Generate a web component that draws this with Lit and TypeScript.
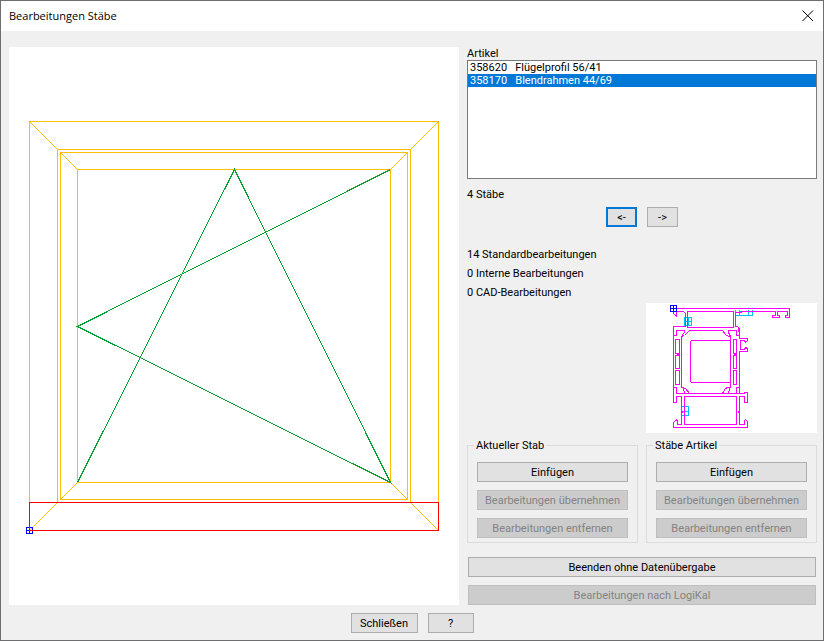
import { LitElement, html, css, svg } from "lit";
import { customElement, property, state } from "lit/decorators.js";

const NB = "\u00a0\u00a0\u00a0";

/** Elevation of the window with frame, sash and opening symbol. */
@customElement("window-elevation")
class WindowElevation extends LitElement {
  static styles = css`
    :host { display: block; background: #fff; }
    svg { display: block; width: 100%; height: 100%; }
    .frame { stroke: #ffbf00; }
    .opening { stroke: #00a030; }
    .marker { stroke: #0000ff; }
    .selected { stroke: #ff0000; }
  `;

  render() {
    return html`<svg viewBox="9 47 450 558" fill="none" shape-rendering="crispEdges" role="img" aria-label="Fensteransicht">
      ${svg`<g transform="translate(.5 .5)">
        <g class="frame">
          <path d="M29 502V121H438V502"/>
          <path d="M57 502V149H410V502"/>
          <path d="M60 152H407V499H60Z"/>
          <path d="M77 169H390V482H77Z"/>
          <path d="M29 121L57 149M438 121L410 149M29 530L57 502M438 530L410 502"/>
          <path d="M60 152L77 169M407 152L390 169M60 499L77 482M407 499L390 482"/>
        </g>
        <path class="opening" d="M77 482L234 169L390 482L77 326L390 169"/>
        <path class="marker" d="M26 527H32V533H26ZM29 527V533M26 530H32"/>
        <path class="selected" d="M29 530V502H438V530Z"/>
      </g>`}
    </svg>`;
  }
}

/** Cross section of the selected profile. */
@customElement("profile-section")
class ProfileSection extends LitElement {
  static styles = css`
    :host { display: block; background: #fff; }
    svg { display: block; width: 100%; height: 100%; }
    .outline { stroke: #ff00ff; }
    .machining { stroke: #00bfff; }
    .origin { stroke: #0000ff; }
  `;

  render() {
    return html`<svg viewBox="6 8 171 130" fill="none" shape-rendering="crispEdges" role="img" aria-label="Profilschnitt">
      ${svg`<g transform="translate(.5 .5)">
        <g class="machining">
          <path d="M44 22H51V30H44ZM44 26H51M48 22V30"/>
          <path d="M41 111H48V120H41ZM41 116H48"/>
          <path d="M95 14V20H112V14M99 14V20M108 14V20M99 16H108"/>
        </g>
        <g class="outline">
          <path d="M33 13H149V22H145V20H147V16H137V20H139V22H132V20H135V16H101V17H95V31H97L99 33V43H107V45L105 47L104 45H100V54H104L105 52L107 53V56H99V98"/>
          <path d="M33 16V18L35 20L36 21V16H43L45 18V31H33V107H36V101H41V129H37V126L36 124L33 127V132H107V126L105 124L104 125V129H99V101H104V107H107V97H104V98H36V92H33"/>
          <path d="M47 16H93V32H47Z"/>
          <path d="M44 101H96V129H44Z"/>
          <path d="M33 40H36V35H44V37L42 39V41M99 40H96V35H88V37L89 39L90 41"/>
          <path d="M49 35H82L85 39L88 41H90V92H87L85 93L82 98H49L45 93L42 92H41V41L44 40Z"/>
          <path d="M44 98V96L43 95V92M88 98V96L89 95V92M99 92H96V98"/>
          <path d="M51 45H90V87H51L50 86V46Z"/>
          <path d="M35 44H39V58H35ZM35 60H39V73H35ZM35 75H39V89H35ZM36 59H39"/>
          <path d="M93 44H96V58H93ZM93 60H96V73H93ZM93 75H96V89H93ZM93 59H96"/>
          <path d="M98 32V36M98 115V117M42 115V117"/>
        </g>
        <path class="origin" d="M30 10H36V16H30ZM33 10V16M30 13H36"/>
      </g>`}
    </svg>`;
  }
}

@customElement("app-root")
class AppRoot extends LitElement {
  @property({ attribute: false }) articles = [
    { id: "358620", name: "Flügelprofil 56/41" },
    { id: "358170", name: "Blendrahmen 44/69" },
  ];
  @state() private selected = "358170";

  static styles = css`
    :host {
      display: block;
      font: 11px/13px Roboto, "Liberation Sans", sans-serif;
      color: #000;
    }
    * { box-sizing: border-box; }
    .dialog {
      display: flex;
      flex-direction: column;
      min-height: 100vh;
      background: #f0f0f0;
      border: 1px solid #6e6e70;
    }
    .titlebar {
      display: flex;
      align-items: center;
      justify-content: space-between;
      height: 30px;
      padding-left: 8px;
      background: #fff;
    }
    .title {
      margin: 0;
      font: 11px/16px "Open Sans", "Noto Sans", sans-serif;
    }
    .close {
      display: grid;
      place-items: center;
      width: 30px;
      height: 30px;
      padding: 0;
      border: 0;
      background: none;
    }
    .close svg { display: block; }
    .content {
      flex: 1;
      display: grid;
      grid-template-columns: 9fr 7fr;
      gap: 8px;
      padding: 16px 6px 8px 8px;
    }
    .side { display: flex; flex-direction: column; min-width: 0; }
    .list {
      display: block;
      width: 100%;
      height: 119px;
      margin: 0;
      padding: 0;
      overflow: hidden;
      font: inherit;
      color: #000;
      background: #fff;
      border: 1px solid #7a7a7a;
      border-radius: 0;
      outline: none;
    }
    .list option {
      min-height: 0;
      height: 13px;
      padding: 0 2px;
      line-height: 13px;
    }
    .list option:checked {
      background: #0078d7 linear-gradient(#0078d7, #0078d7);
      -webkit-text-fill-color: #fff;
    }
    .count { margin: 9px 0 6px; }
    .nav { display: flex; justify-content: center; gap: 10px; }
    .nav .btn { width: 31px; }
    .stats {
      margin: 18px 0 1px;
      padding: 0;
      list-style: none;
      line-height: 19px;
    }
    .preview { align-self: flex-end; width: 171px; height: 130px; }
    .groups {
      display: grid;
      grid-template-columns: 1fr 1fr;
      gap: 8px;
      margin: 6px 0 14px;
    }
    .group {
      display: flex;
      flex-direction: column;
      gap: 8px;
      min-width: 0;
      margin: 0;
      padding: 10px 9px 4px;
      border: 1px solid #dcdcdc;
    }
    .group legend { margin-left: -3px; padding: 0 2px; }
    .actions { display: flex; flex-direction: column; gap: 8px; padding: 0 1px; }
    .btn {
      height: 20px;
      padding: 0;
      font: inherit;
      color: #000;
      background: #e1e1e1;
      border: 1px solid #adadad;
      border-radius: 0;
    }
    .btn:disabled { color: #838383; background: #ccc; border-color: #bfbfbf; }
    .btn.default { border: 2px solid #0078d7; }
    .footer { display: flex; justify-content: center; gap: 10px; padding-bottom: 7px; }
    .footer .btn { width: 46px; }
    .footer .wide { width: 67px; }
  `;

  private group(title: string) {
    return html`<fieldset class="group">
      <legend>${title}</legend>
      <button class="btn">Einfügen</button>
      <button class="btn" disabled>Bearbeitungen übernehmen</button>
      <button class="btn" disabled>Bearbeitungen entfernen</button>
    </fieldset>`;
  }

  render() {
    return html`<main class="dialog">
      <header class="titlebar">
        <h1 class="title">Bearbeitungen Stäbe</h1>
        <button class="close" aria-label="Schließen">
          <svg width="12" height="12" viewBox="0 0 12 12" fill="none" stroke="#000"><path d="M.5 .5L11 11M11 .5L.5 11"/></svg>
        </button>
      </header>
      <div class="content">
        <window-elevation></window-elevation>
        <section class="side">
          <label for="articles">Artikel</label>
          <select id="articles" class="list" size="9"
            @change=${(e: Event) => (this.selected = (e.target as HTMLSelectElement).value)}>
            ${this.articles.map(
              (a) => html`<option value=${a.id} ?selected=${a.id === this.selected}>${a.id + NB + a.name}</option>`
            )}
          </select>
          <p class="count">4 Stäbe</p>
          <div class="nav">
            <button class="btn default">&lt;-</button>
            <button class="btn">-&gt;</button>
          </div>
          <ul class="stats">
            <li>14 Standardbearbeitungen</li>
            <li>0 Interne Bearbeitungen</li>
            <li>0 CAD-Bearbeitungen</li>
          </ul>
          <profile-section class="preview"></profile-section>
          <div class="groups">${this.group("Aktueller Stab")}${this.group("Stäbe Artikel")}</div>
          <div class="actions">
            <button class="btn">Beenden ohne Datenübergabe</button>
            <button class="btn" disabled>Bearbeitungen nach LogiKal</button>
          </div>
        </section>
      </div>
      <footer class="footer">
        <button class="btn wide">Schließen</button>
        <button class="btn">?</button>
      </footer>
    </main>`;
  }
}
